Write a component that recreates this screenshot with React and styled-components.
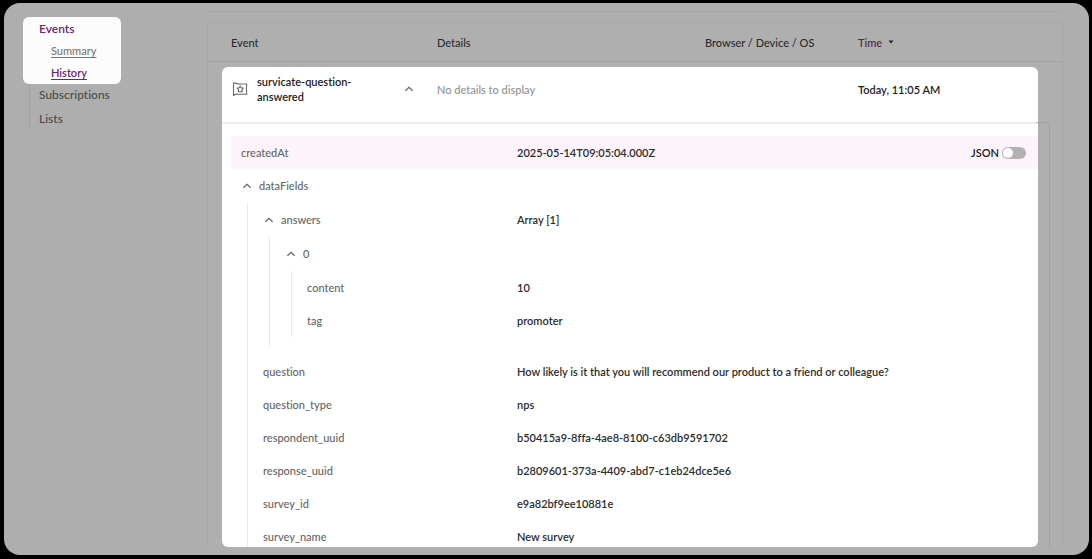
import React, { useState } from 'react';
import styled, { createGlobalStyle, css } from 'styled-components';

const GlobalStyle = createGlobalStyle`
  * {
    box-sizing: border-box;
  }

  body {
    margin: 0;
    background: #000;
    color: #333;
    font: 500 11px/15px Lato, 'Liberation Sans', sans-serif;
    font-variant-ligatures: none;
  }

  button {
    font: inherit;
    color: inherit;
    background: none;
    border: 0;
    padding: 0;
    cursor: pointer;
  }

  svg {
    display: block;
    flex-shrink: 0;
  }
`;

const Page = styled.div`
  height: 100vh;
  padding: 3px 3px 4px 4px;
`;

const Screen = styled.div`
  display: flex;
  height: 100%;
  padding: 8px 26px 8px 19px;
  border-radius: 16px;
  background: #aeaeae;
`;

const Sidebar = styled.nav`
  flex: 0 0 98px;
  display: flex;
  flex-direction: column;
  margin: 6px 86px 0 0;
  font-size: 12px;
`;

const ActiveGroup = styled.div`
  display: flex;
  flex-direction: column;
  gap: 7px;
  height: 67px;
  padding: 4px 0 0 16px;
  border-radius: 6px;
  background: #fcfcfc;
`;

const NavList = styled.div`
  display: flex;
  flex-direction: column;
  gap: 9px;
  margin-left: 6px;
  padding: 3px 0 2px 9px;
  border-left: 1px solid #a2a2a2;
`;

const NavLink = styled.a`
  color: ${p => (p.$active ? '#6a266d' : '#4c4c4c')};
  font-weight: ${p => (p.$active ? 600 : 500)};
  text-decoration: none;

  ${p => p.$sub && css`
    margin-left: 12px;
    font-size: 11px;
    color: ${p.$active ? '#6a266d' : '#777'};
    text-decoration: underline;
    text-underline-offset: 2px;
  `}
`;

const Main = styled.main`
  flex: 1;
  min-width: 0;
  display: flex;
  flex-direction: column;
  padding-top: 10px;
  border-top: 1px solid #a6a6a6;
`;

const Table = styled.table`
  flex: 1;
  min-height: 0;
  display: flex;
  flex-direction: column;
  border: 1px solid #a8a8a8;
  border-bottom: 0;
  border-radius: 4px 4px 0 0;
  background: #afafaf;
`;

const Head = styled.thead`
  display: block;
  padding: 0 24px 0 14px;
  border-bottom: 1px solid #a2a2a2;
`;

const Panel = styled.tbody`
  flex: 1;
  min-height: 0;
  display: flex;
  flex-direction: column;
  position: relative;
  margin: 5px 24px 0 14px;
  border-radius: 6px;
  background: #fff;

  &::after {
    content: '';
    position: absolute;
    top: 55px;
    right: -12px;
    bottom: 0;
    width: 12px;
    border: solid #a2a2a2;
    border-width: 1px 1px 0 0;
    border-top-right-radius: 4px;
  }
`;

const Row = styled.tr`
  flex-shrink: 0;
  display: grid;
  grid-template-columns: 206fr 268fr 153fr 180fr;
  align-items: center;
  height: ${p => (p.$head ? '38px' : '55px')};
  padding: ${p => (p.$head ? '0 0 0 9px' : '0 0 11px 9px')};
`;

const HeadCell = styled.th`
  padding: 0;
  text-align: left;
  font-weight: 500;
  color: ${p => (p.$sorted ? '#4e2450' : '#2c2c2c')};
`;

const SortButton = styled.button`
  display: flex;
  align-items: center;
  gap: 6px;
`;

const Cell = styled.td`
  padding: 0;
  color: ${p => (p.$muted ? '#929292' : '#1c1c1c')};
  font-weight: ${p => (p.$muted ? 500 : 600)};
`;

const EventName = styled.div`
  display: flex;
  align-items: center;
  padding-right: 22px;

  span {
    flex: 1;
    max-width: 110px;
    margin: 0 auto 0 9px;
  }
`;

const DetailsRow = styled.tr`
  flex: 1;
  min-height: 0;
  display: block;
  overflow-y: auto;
  scrollbar-width: none;
  border-top: 2px solid #eee;
  border-radius: 0 0 6px 6px;
`;

const DetailsCell = styled.td`
  display: block;
  padding: 12px 0 0 9px;
`;

const Highlight = styled.div`
  display: flex;
  align-items: center;
  justify-content: space-between;
  padding: 0 12px 0 10px;
  background: #fdf3fb;
`;

const Tree = styled.div`
  padding-left: 10px;
`;

const Field = styled.div`
  display: grid;
  grid-template-columns: ${p => 276 - 22 * p.$depth}px 1fr;
  align-items: center;
  height: 33px;
`;

const Key = styled.span`
  color: #666;
`;

const KeyToggle = styled.button`
  display: flex;
  align-items: center;
  gap: 6px;
  color: #666;
`;

const Value = styled.span`
  color: #2c2c2c;
  font-weight: 600;
`;

const Branch = styled.div`
  display: flow-root;
  margin: 1px 0 9px 6px;
  padding-left: 15px;
  border-left: 1px solid #e8e8e8;
`;

const JsonLabel = styled.label`
  display: flex;
  align-items: center;
  gap: 3px;
  color: #222;
  font-weight: 600;
`;

const Switch = styled.input`
  appearance: none;
  width: 24px;
  height: 12px;
  margin: 0;
  padding: 1px;
  border-radius: 6px;
  background: #b5b0b4;
  cursor: pointer;

  &::before {
    content: '';
    display: block;
    width: 10px;
    height: 10px;
    border-radius: 50%;
    background: #fff;
  }

  &:checked {
    padding-left: 13px;
    background: #6a266d;
  }
`;

const fields = [
    {
        name: 'answers', value: 'Array [1]', children: [
            {
                name: '0', children: [
                    { name: 'content', value: '10' },
                    { name: 'tag', value: 'promoter' }
                ]
            }
        ]
    },
    { name: 'question', value: 'How likely is it that you will recommend our product to a friend or colleague?' },
    { name: 'question_type', value: 'nps' },
    { name: 'respondent_uuid', value: 'b50415a9-8ffa-4ae8-8100-c63db9591702' },
    { name: 'response_uuid', value: 'b2809601-373a-4409-abd7-c1eb24dce5e6' },
    { name: 'survey_id', value: 'e9a82bf9ee10881e' },
    { name: 'survey_name', value: 'New survey' }
];

function Chevron() {
    return (
        <svg width="12" height="12" viewBox="0 0 12 12" fill="none" stroke="#666" strokeWidth="1.3" aria-hidden="true">
            <path d="M2.4 7.8 6 4.4 9.6 7.8" />
        </svg>
    );
}

function EventIcon() {
    return (
        <svg width="17" height="16" viewBox="0 0 17 16" fill="none" stroke="#6a6a6a" strokeWidth="1.1" strokeLinejoin="round" aria-hidden="true">
            <path d="M2.5 15V1.800C4.500 1.600 6 3 8 3H15.800L15.300 8l.5 5.200H8C6 13.200 4.500 12.800 2.500 14.500" />
            <path d="m9.200 4.900 1 1.900 2.100.3-1.500 1.500.4 2.200H7.200l.4-2.200-1.500-1.500 2.100-.3z" />
        </svg>
    );
}

function TreeField({ field, depth }) {
    const [open, setOpen] = useState(true);

    return (
        <>
            <Field $depth={depth}>
                {field.children
                    ? <KeyToggle aria-expanded={open} onClick={() => setOpen(!open)}><Chevron />{field.name}</KeyToggle>
                    : <Key>{field.name}</Key>}
                {field.value && <Value>{field.value}</Value>}
            </Field>
            {field.children && open && (
                <Branch>
                    {field.children.map(item => <TreeField key={item.name} field={item} depth={depth + 1} />)}
                </Branch>
            )}
        </>
    );
}

export default function App() {
    const [json, setJson] = useState(false);
    const [expanded, setExpanded] = useState(true);

    return (
        <Page>
            <GlobalStyle />
            <Screen>
                <Sidebar>
                    <ActiveGroup>
                        <NavLink href="#events" $active>Events</NavLink>
                        <NavLink href="#summary" $sub>Summary</NavLink>
                        <NavLink href="#history" $sub $active>History</NavLink>
                    </ActiveGroup>
                    <NavList>
                        <NavLink href="#subscriptions">Subscriptions</NavLink>
                        <NavLink href="#lists">Lists</NavLink>
                    </NavList>
                </Sidebar>
                <Main>
                    <Table>
                        <Head>
                            <Row $head>
                                <HeadCell>Event</HeadCell>
                                <HeadCell>Details</HeadCell>
                                <HeadCell>Browser / Device / OS</HeadCell>
                                <HeadCell $sorted>
                                    <SortButton>
                                        Time
                                        <svg width="6" height="4" viewBox="0 0 6 4" aria-hidden="true"><path d="M.5.5h5L3 3.5z" fill="#222" /></svg>
                                    </SortButton>
                                </HeadCell>
                            </Row>
                        </Head>
                        <Panel>
                            <Row>
                                <Cell>
                                    <EventName>
                                        <EventIcon />
                                        <span>survicate-question-answered</span>
                                        <button aria-label="Toggle details" aria-expanded={expanded} onClick={() => setExpanded(!expanded)}><Chevron /></button>
                                    </EventName>
                                </Cell>
                                <Cell $muted>No details to display</Cell>
                                <Cell />
                                <Cell>Today, 11:05 AM</Cell>
                            </Row>
                            {expanded && (
                                <DetailsRow>
                                    <DetailsCell colSpan="4">
                                        <Highlight>
                                            <Field $depth={0}>
                                                <Key>createdAt</Key>
                                                <Value>2025-05-14T09:05:04.000Z</Value>
                                            </Field>
                                            <JsonLabel>
                                                JSON
                                                <Switch type="checkbox" checked={json} onChange={e => setJson(e.target.checked)} />
                                            </JsonLabel>
                                        </Highlight>
                                        <Tree>
                                            <TreeField field={{ name: 'dataFields', children: fields }} depth={0} />
                                        </Tree>
                                    </DetailsCell>
                                </DetailsRow>
                            )}
                        </Panel>
                    </Table>
                </Main>
            </Screen>
        </Page>
    );
}
